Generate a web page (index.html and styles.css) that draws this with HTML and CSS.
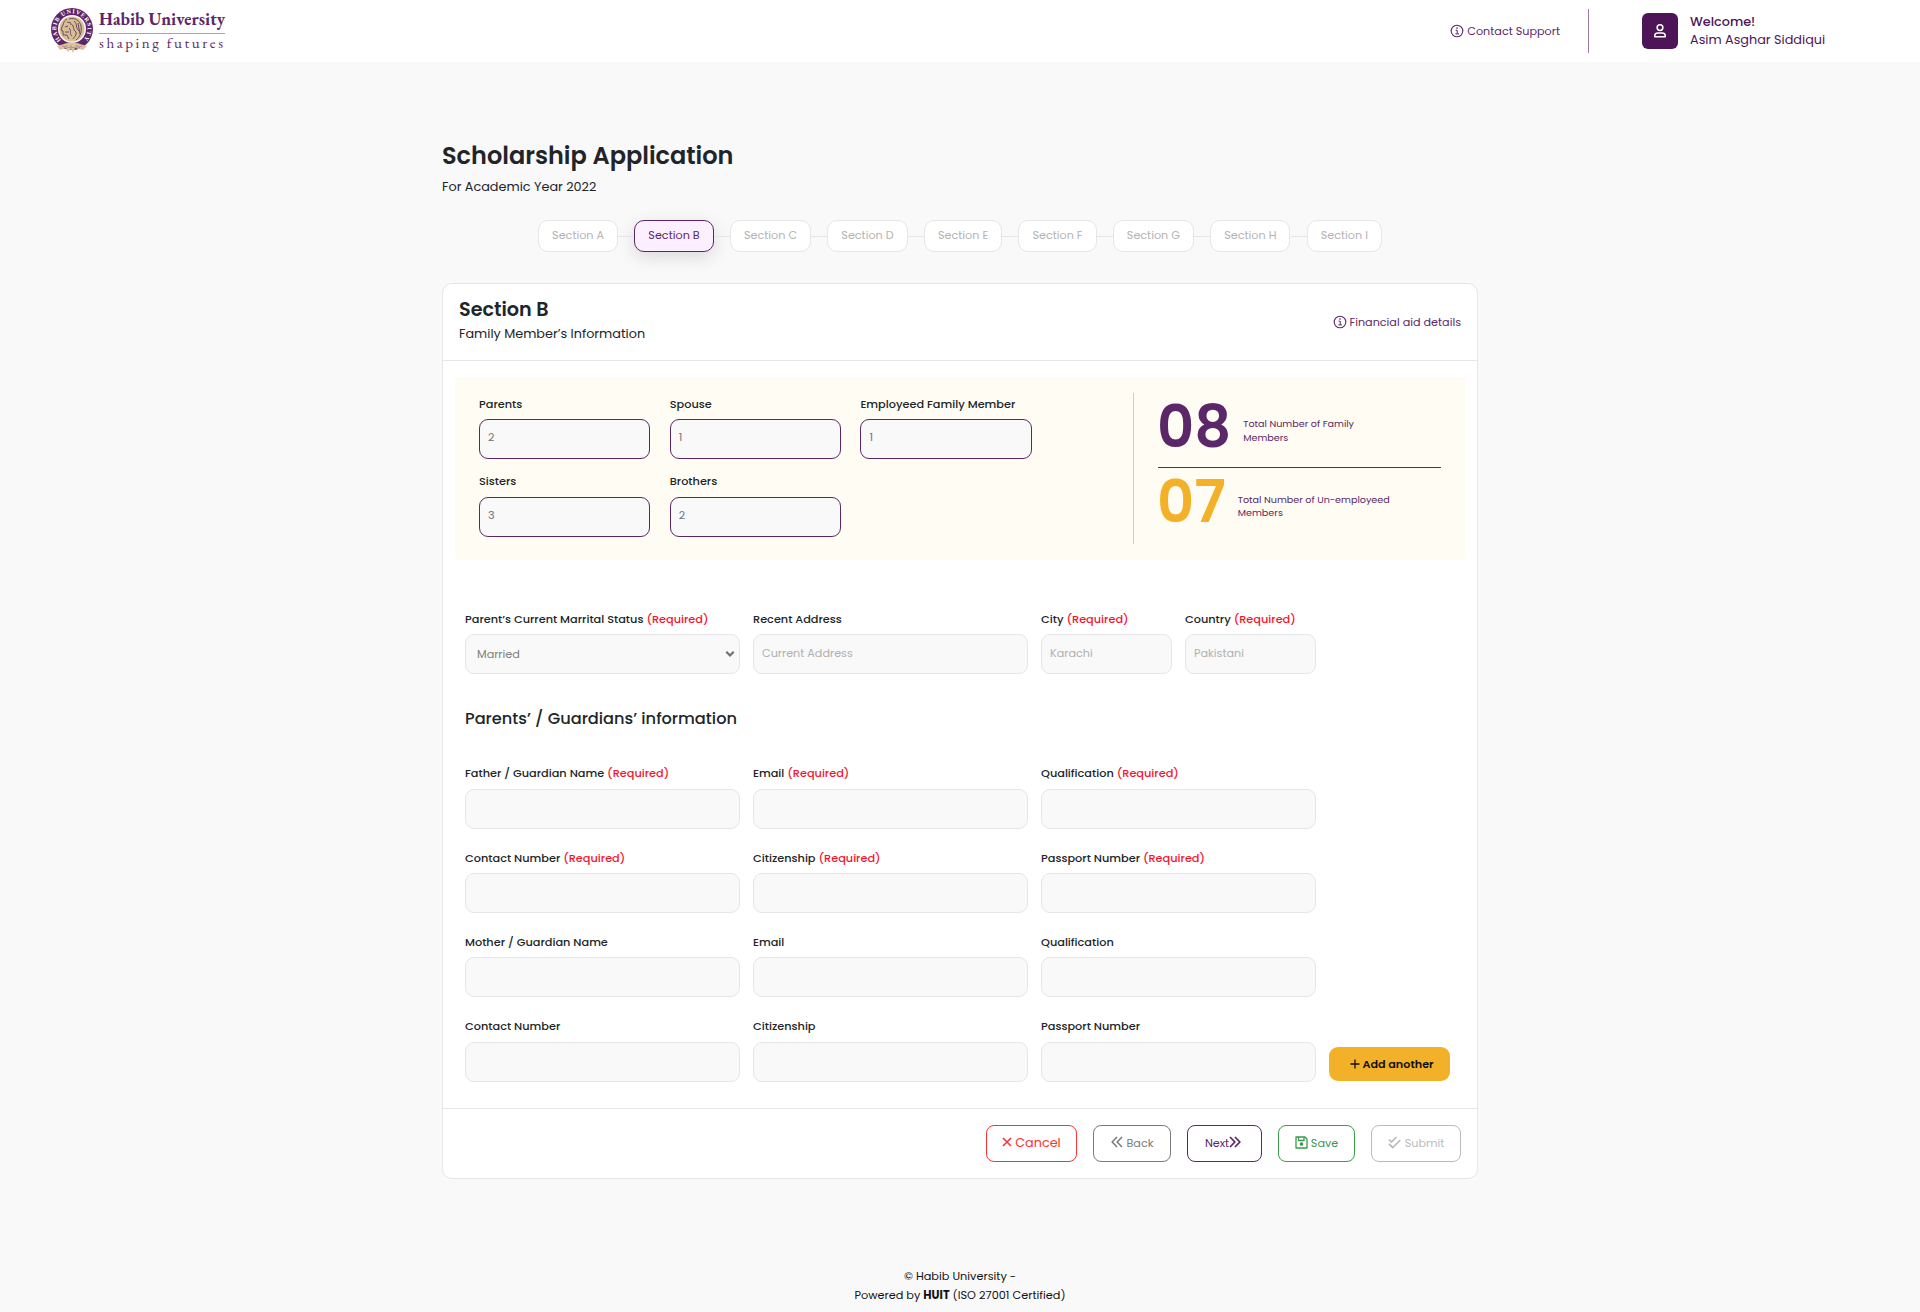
FILE: index.html
```html
<!DOCTYPE html>
<html lang="en">
<head>
<meta charset="utf-8">
<title>Scholarship Application - Habib University</title>
<link rel="stylesheet" href="styles.css">
</head>
<body>
<svg class="defs" width="0" height="0" aria-hidden="true">
  <symbol id="info" viewBox="0 0 14 14"><circle cx="7" cy="7" r="5.8" fill="none" stroke="currentColor" stroke-width="1.1"/><path d="M5.600 6.200H7.200V9.800M5.400 9.900H9" fill="none" stroke="currentColor" stroke-width="1"/><circle cx="7" cy="4.100" r=".8" fill="currentColor"/></symbol>
</svg>
<header class="topbar">
  <a class="brand">
    <svg class="crest" width="44" height="46" viewBox="0 0 44 46">
      <circle cx="22" cy="21" r="21" fill="#5f2568"/>
      <circle cx="22" cy="21" r="14" fill="#fff"/>
      <circle cx="22" cy="21" r="12.600" fill="#d6bf90"/>
      <path id="arc" d="M11 32A15.600 15.600 0 1 1 33 32" fill="none"/>
      <text class="crest-text"><textPath href="#arc" textLength="72">HABIB UNIVERSITY</textPath></text>
      <path d="M17 11C13 13 14 16 12 19L11 22L13 23L13 27L17 27L19 31M19 11C25 9 30 13 31 18C32 24 30 29 26 32M17 14L21 15M15 19L18 18M20 16C25 16 22 22 26 24C27 27 24 29 23 31M24 13C28 16 25 20 29 23M19 20C22 23 19 26 22 28M28 15L30 26M15 24L19 24" fill="none" stroke="#6f4568" stroke-width="1"/>
      <path d="M14 36C19 34 25 34 30 36L37 38L33 42L25 40L23 45L21 41L18 44L16 40L10 42L7 38Z" fill="#dac49a"/>
      <path d="M12 38C18 40 26 40 32 38M17 37L14 40M21 37V41M26 37L30 40" fill="none" stroke="#a98597" stroke-width=".8"/>
    </svg>
    <svg class="wordmark" width="128" height="54" viewBox="0 0 128 54">
      <text class="name" x="0" y="25" textLength="126" lengthAdjust="spacingAndGlyphs">Habib University</text>
      <path d="M0 33.500H126" stroke="#b597ba"/>
      <text class="motto" x="0" y="47.500" textLength="124">shaping futures</text>
    </svg>
  </a>
  <div class="account">
    <a class="info-link"><svg width="14" height="14"><use href="#info"/></svg>Contact Support</a>
    <div class="user">
      <span class="avatar"><svg width="14" height="16" viewBox="0 0 14 16" fill="none" stroke="#fff" stroke-width="1.500"><circle cx="7" cy="4.600" r="2.900"/><path d="M1.700 13.800V12.900C1.700 11 3 10 4.800 10H9.200C11 10 12.300 11 12.300 12.900V13.800Z" stroke-linejoin="round"/></svg></span>
      <span class="who"><b>Welcome!</b><span>Asim Asghar Siddiqui</span></span>
    </div>
  </div>
</header>

<main class="page">
  <h1>Scholarship Application</h1>
  <p class="year">For Academic Year 2022</p>
  <nav class="steps">
    <a class="step">Section A</a><a class="step active">Section B</a><a class="step">Section C</a><a class="step">Section D</a><a class="step">Section E</a><a class="step">Section F</a><a class="step">Section G</a><a class="step">Section H</a><a class="step">Section I</a>
  </nav>

  <section class="card">
    <header class="card-head">
      <div><h2>Section B</h2><p>Family Member’s Information</p></div>
      <a class="info-link aid"><svg width="14" height="14"><use href="#info"/></svg>Financial aid details</a>
    </header>

    <div class="summary">
      <div class="counts">
        <label class="field"><span>Parents</span><input placeholder="2"></label>
        <label class="field"><span>Spouse</span><input placeholder="1"></label>
        <label class="field"><span>Employeed Family Member</span><input placeholder="1"></label>
        <label class="field"><span>Sisters</span><input placeholder="3"></label>
        <label class="field"><span>Brothers</span><input placeholder="2"></label>
      </div>
      <div class="totals">
        <div class="total"><strong>08</strong><span>Total Number of Family<br>Members</span></div>
        <div class="total unemployed"><strong>07</strong><span>Total Number of Un-employeed<br>Members</span></div>
      </div>
    </div>

    <form class="form">
      <div class="grid address">
        <label class="field"><span>Parent’s Current Marrital Status <i>(Required)</i></span>
          <span class="select">Married<svg width="10" height="8" viewBox="0 0 10 8"><path d="M1.300 1.800L5 5.500L8.700 1.800" fill="none" stroke="#6f6f6f" stroke-width="2.200"/></svg></span></label>
        <label class="field"><span>Recent Address</span><input placeholder="Current Address"></label>
        <label class="field"><span>City <i>(Required)</i></span><input placeholder="Karachi"></label>
        <label class="field"><span>Country <i>(Required)</i></span><input placeholder="Pakistani"></label>
      </div>
      <h3>Parents’ / Guardians’ information</h3>
      <div class="grid people">
        <label class="field"><span>Father / Guardian Name <i>(Required)</i></span><input></label>
        <label class="field"><span>Email <i>(Required)</i></span><input></label>
        <label class="field"><span>Qualification <i>(Required)</i></span><input></label>
        <label class="field"><span>Contact Number <i>(Required)</i></span><input></label>
        <label class="field"><span>Citizenship <i>(Required)</i></span><input></label>
        <label class="field"><span>Passport Number <i>(Required)</i></span><input></label>
        <label class="field"><span>Mother / Guardian Name</span><input></label>
        <label class="field"><span>Email</span><input></label>
        <label class="field"><span>Qualification</span><input></label>
        <label class="field"><span>Contact Number</span><input></label>
        <label class="field"><span>Citizenship</span><input></label>
        <label class="field"><span>Passport Number</span><input></label>
        <button type="button" class="add"><svg width="10" height="10" viewBox="0 0 10 10"><path d="M5 .5V9.500M.5 5H9.500" stroke="#111" stroke-width="1.300"/></svg>Add another</button>
      </div>
    </form>

    <footer class="actions">
      <button class="btn cancel"><svg width="10" height="10" viewBox="0 0 10 10"><path d="M1 1L9 9M9 1L1 9" stroke="currentColor" stroke-width="1.600"/></svg>Cancel</button>
      <button class="btn back"><svg width="12" height="12" viewBox="0 0 12 12"><path d="M6 1L1.200 6L6 11M11 1L6.200 6L11 11" fill="none" stroke="currentColor" stroke-width="1.500"/></svg>Back</button>
      <button class="btn next">Next<svg width="12" height="12" viewBox="0 0 12 12"><path d="M1 1L5.800 6L1 11M6 1L10.800 6L6 11" fill="none" stroke="currentColor" stroke-width="1.700"/></svg></button>
      <button class="btn save"><svg width="13" height="13" viewBox="0 0 13 13" fill="none" stroke="currentColor" stroke-width="1.300"><path d="M1 1H10L12 3V12H1Z" stroke-linejoin="round"/><path d="M3.500 1V4.500H9V1"/><circle cx="6.500" cy="8" r="1.200" fill="currentColor"/></svg>Save</button>
      <button class="btn submit"><svg width="13" height="13" viewBox="0 0 13 13" fill="none" stroke="currentColor" stroke-width="1.700"><path d="M1 3.500L3.500 6L8.500 1M1 8L4.800 11.500L12.300 4"/></svg>Submit</button>
    </footer>
  </section>
</main>

<footer class="legal"><p>© Habib University -</p><p>Powered by <b>HUIT</b> (ISO 27001 Certified)</p></footer>
</body>
</html>
```
FILE: styles.css
```css
* { box-sizing: border-box; }
body {
  margin: 0;
  background: #f9f9f9;
  color: #212529;
  font-family: Poppins, Inter, sans-serif;
  font-size: 12.8px;
  line-height: 1.5;
}
h1, h2, h3, p { margin: 0; }
.defs { display: block; height: 0; }

/* top bar */
.topbar {
  display: flex;
  justify-content: space-between;
  height: 62px;
  padding: 0 95px 0 49px;
  background: #fff;
}
.brand { display: flex; gap: 5px; }
.crest { margin: 8px 0 0 1px; }
.crest-text { font: 700 6px "Liberation Serif", serif; fill: #fff; }
.wordmark { overflow: visible; fill: #5c2768; font-family: "EB Garamond", "Liberation Serif", serif; }
.name { font-size: 18px; font-weight: 700; }
.motto { font-size: 15px; }
.account { display: flex; align-items: center; }
.info-link { display: flex; align-items: center; gap: 3px; color: #5c2768; font-size: 11.2px; }
.account .info-link {
  height: 44px;
  padding-right: 28px;
  border-right: 1px solid #9d7ba5;
}
.user { display: flex; gap: 12px; width: 236px; padding-left: 53px; color: #4d1558; }
.avatar {
  display: flex;
  flex: none;
  align-items: center;
  justify-content: center;
  width: 36px;
  height: 36px;
  border-radius: 6px;
  background: #4d1558;
}
.who { display: flex; flex-direction: column; line-height: 18px; white-space: nowrap; }
.who b { font-weight: 500; }

/* page heading and steps */
.page { width: 1036px; margin: 0 auto; padding-top: 76px; }
h1 { font-size: 24px; font-weight: 600; line-height: 36px; }
.year { margin-top: 3px; line-height: 20px; }
.steps { display: flex; justify-content: center; gap: 16.3px; margin-top: 23px; }
.step {
  position: relative;
  height: 32px;
  padding: 0 13px;
  border: 1px solid #e6e6e6;
  border-radius: 10px;
  background: #fff;
  color: #b3b3b3;
  font-size: 11.2px;
  line-height: 28px;
}
.step + .step::before {
  content: "";
  position: absolute;
  top: 15px;
  left: -17px;
  width: 16px;
  height: 1px;
  background: #e6e6e6;
}
.step.active {
  border-color: #5c2768;
  background: #fcefff;
  color: #5c2768;
  box-shadow: 0 5px 18px rgba(0, 0, 0, .13);
}

/* card */
.card {
  height: 896px;
  margin-top: 31px;
  border: 1px solid #e6e6e6;
  border-radius: 10px;
  background: #fff;
}
.card-head {
  display: flex;
  align-items: center;
  justify-content: space-between;
  height: 77px;
  padding: 0 16px;
  border-bottom: 1px solid #e6e6e6;
}
h2 { margin-top: -5px; font-size: 19.2px; font-weight: 600; line-height: 29px; }
.card-head p { line-height: 20px; }
.aid { padding-top: 1px; }

/* family summary */
.summary {
  display: flex;
  width: 1010px;
  height: 183px;
  margin: 16px 0 0 12px;
  padding: 16px 24px;
  border-radius: 3px;
  background: #fffcf3;
}
.counts {
  display: grid;
  grid-template-columns: repeat(3, 171.2px);
  grid-auto-rows: 77.8px;
  column-gap: 19.5px;
  width: 654px;
}
.field { display: block; font-size: 11.3px; font-weight: 500; line-height: 20px; white-space: nowrap; }
.field span { display: block; }
.field i { color: #f8142d; font-style: normal; }
input, .field .select {
  display: block;
  width: 100%;
  height: 40px;
  margin: 5px 0 0;
  padding: 0 8px 2px;
  border: 1px solid #e6e6e6;
  border-radius: 9px;
  background: #f9f9f9;
  font: 400 11.2px Poppins, Inter, sans-serif;
}
input::placeholder { color: #b0b0b0; opacity: 1; }
.counts .field { padding-top: .6px; }
.counts input { margin-top: 5.4px; border-color: #5c2768; }
.counts input::placeholder { color: #757575; }
.totals { width: 308px; height: 151px; padding-left: 24px; border-left: 1px solid #d0ccd0; }
.total {
  display: flex;
  gap: 12px;
  height: 75px;
  border-bottom: 1px solid #5c2768;
  color: #5c2768;
}
.total strong { margin-left: -1px; font-size: 57.6px; font-weight: 600; line-height: 69px; }
.total span { padding-top: 24px; font-size: 9.6px; line-height: 14px; }
.unemployed { border: 0; }
.unemployed strong { color: #f2b129; line-height: 68px; }
.unemployed span { padding-top: 25px; line-height: 13px; }

/* details form */
.form { padding: 49px 22px 0; }
.grid { display: grid; column-gap: 13px; }
.address { grid-template-columns: 275px 275px 131px 131px; }
.field .select {
  display: flex;
  align-items: center;
  justify-content: space-between;
  padding: 0 4px 0 11px;
  color: #808080;
}
h3 { margin: 33px 0 32px; font-size: 16.2px; font-weight: 500; line-height: 24px; }
.people { grid-template-columns: repeat(3, 275px) 121px; grid-auto-rows: 84.2px; }
.people .field { padding-top: .4px; }
.people input { margin-top: 5.6px; }
.people .field:nth-child(3n+1) { grid-column-start: 1; }
.add {
  display: flex;
  align-items: center;
  justify-content: center;
  gap: 2px;
  height: 34px;
  margin-top: 31px;
  padding: 1px 0 0 5px;
  border: 0;
  border-radius: 9px;
  background: #f2b129;
  color: #111;
  font: 600 11.2px Poppins, Inter, sans-serif;
}

/* form actions */
.actions {
  display: flex;
  justify-content: flex-end;
  gap: 16px;
  margin-top: 8px;
  padding: 16px 16px 0;
  border-top: 1px solid #e6e6e6;
}
.btn {
  display: flex;
  align-items: center;
  justify-content: center;
  gap: 4px;
  height: 37px;
  padding: 0;
  border: 1px solid;
  border-radius: 8px;
  background: #fff;
  font: 400 11.2px Poppins, Inter, sans-serif;
}
.btn svg { margin-bottom: 2px; }
.cancel { width: 91px; gap: 3px; color: #fb3333; font-size: 12.8px; }
.back { width: 78px; color: #7a7a7a; }
.next { width: 75px; gap: 0; padding-right: 3px; color: #5c2768; }
.save { width: 77px; gap: 3px; color: #3d9a4b; }
.submit { width: 90px; color: #bbb; }

.legal { margin-top: 88px; color: #111; font-size: 11.3px; line-height: 19px; text-align: center; }
```
